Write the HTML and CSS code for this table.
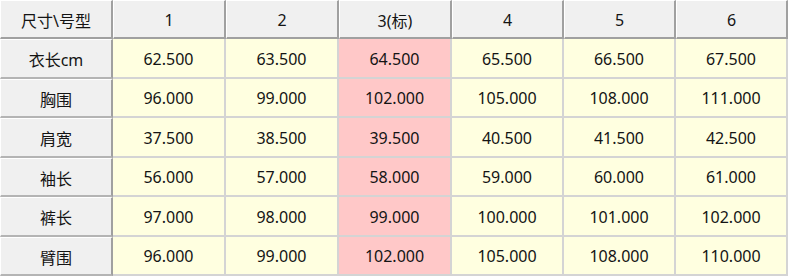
FILE: index.html
```html
<!DOCTYPE html>
<html>
<head>
<meta charset="utf-8">
<link rel="stylesheet" href="styles.css">
</head>
<body>
<table class="grid">
  <colgroup>
    <col class="c-head"><col class="c-wide"><col class="c-wide"><col class="c-wide"><col class="c-nar"><col class="c-nar"><col class="c-nar">
  </colgroup>
  <thead>
    <tr class="r-head">
      <th class="hd">尺寸\号型</th><th class="hd">1</th><th class="hd">2</th><th class="hd">3(标)</th><th class="hd">4</th><th class="hd">5</th><th class="hd">6</th>
    </tr>
  </thead>
  <tbody>
    <tr class="r-a"><th class="rh">衣长cm</th><td>62.500</td><td>63.500</td><td class="std">64.500</td><td>65.500</td><td>66.500</td><td>67.500</td></tr>
    <tr class="r-b"><th class="rh">胸围</th><td>96.000</td><td>99.000</td><td class="std">102.000</td><td>105.000</td><td>108.000</td><td>111.000</td></tr>
    <tr class="r-a"><th class="rh">肩宽</th><td>37.500</td><td>38.500</td><td class="std">39.500</td><td>40.500</td><td>41.500</td><td>42.500</td></tr>
    <tr class="r-b"><th class="rh">袖长</th><td>56.000</td><td>57.000</td><td class="std">58.000</td><td>59.000</td><td>60.000</td><td>61.000</td></tr>
    <tr class="r-a"><th class="rh">裤长</th><td>97.000</td><td>98.000</td><td class="std">99.000</td><td>100.000</td><td>101.000</td><td>102.000</td></tr>
    <tr class="r-b"><th class="rh">臂围</th><td>96.000</td><td>99.000</td><td class="std">102.000</td><td>105.000</td><td>108.000</td><td>110.000</td></tr>
  </tbody>
</table>
</body>
</html>
```
FILE: styles.css
```css
html, body {
  margin: 0;
  padding: 0;
  background: #ffffff;
}
.grid {
  table-layout: fixed;
  border-collapse: separate;
  border-spacing: 0;
  width: 787px;
  font-family: "Noto Sans", "Noto Sans CJK SC", sans-serif;
  font-size: 16px;
  color: #141414;
}
.c-head { width: 113px; }
.c-wide { width: 113px; }
.c-nar { width: 112px; }
.grid th, .grid td {
  box-sizing: border-box;
  padding: 1px 0 0 0;
  text-align: center;
  vertical-align: middle;
  font-weight: normal;
  white-space: nowrap;
}
.r-head { height: 39px; }
.r-a { height: 40px; }
.r-b { height: 39px; }
.hd {
  background: #f0f0f0;
  border-top: 1px solid #ffffff;
  border-left: 1px solid #ffffff;
  border-right: 2px solid #a0a0a0;
  border-bottom: 2px solid #a0a0a0;
}
.rh {
  background: #f0f0f0;
  border-left: 1px solid #ffffff;
  border-top: 1px solid #ffffff;
  border-right: 2px solid #a0a0a0;
  border-bottom: 2px solid #b4b4b4;
}
.grid td {
  background: #ffffe0;
  border-right: 2px solid #d4d4d4;
  border-bottom: 2px solid #d4d4d4;
}
.grid td.std {
  background: #ffc8c8;
}
```
